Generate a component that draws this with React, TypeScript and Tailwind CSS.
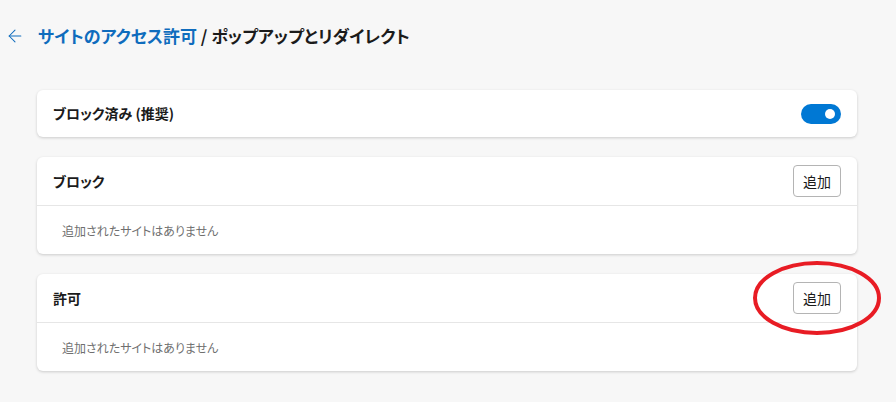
import { ArrowLeft } from 'lucide-react'

const FONT = "font-['Segoe_UI','Noto_Sans_CJK_JP',sans-serif] [font-feature-settings:'palt']"

function SiteListCard({ title }: { title: string }) {
  return (
    <section className="bg-white rounded-md shadow-[0_1px_3px_rgba(0,0,0,0.18)]">
      <div className="h-[49px] flex items-center justify-between pl-4 pr-4 border-b border-[#e6e6e6]">
        <span className="text-[14px] font-semibold text-[#1b1b1b]">{title}</span>
        <button className="w-12 h-8 border border-[#b4b4b4] rounded-sm text-[14px] text-[#1b1b1b] bg-white">
          追加
        </button>
      </div>
      <div className="h-[48px] flex items-center pl-[25px] pt-[2px]">
        <span className="text-[12px] text-[#6f6f6f]">追加されたサイトはありません</span>
      </div>
    </section>
  )
}

export default function App() {
  return (
    <div className={`relative w-[896px] h-[402px] bg-[#f7f7f7] overflow-hidden ${FONT}`}>
      {/* breadcrumb header */}
      <header className="h-[72px] flex items-center pl-[5px] pb-[1px]">
        <ArrowLeft size={20} strokeWidth={1.25} className="text-[#0f6cbd] mr-[13px]" />
        <h1 className="text-[17px] font-bold">
          <span className="text-[#0f6cbd]">サイトのアクセス許可</span>
          <span className="text-[#1b1b1b]"> / ポップアップとリダイレクト</span>
        </h1>
      </header>

      <main className="ml-[37px] w-[820px] mt-[18px] flex flex-col gap-5">
        <section className="h-[47px] bg-white rounded-md shadow-[0_1px_3px_rgba(0,0,0,0.18)] flex items-center justify-between pl-4 pr-4">
          <span className="text-[14px] font-semibold text-[#1b1b1b]">ブロック済み (推奨)</span>
          <div className="w-10 h-5 rounded-full bg-[#0078d4] flex items-center justify-end pr-[6px]">
            <span className="w-[10px] h-[10px] rounded-full bg-white" />
          </div>
        </section>

        <SiteListCard title="ブロック" />
        <SiteListCard title="許可" />
      </main>

      {/* red annotation ellipse */}
      <svg className="absolute left-[750px] top-[259px] pointer-events-none" width="134" height="78" viewBox="0 0 134 78">
        <ellipse cx="67" cy="39" rx="62" ry="35" fill="none" stroke="#e81c24" strokeWidth="4" />
      </svg>
    </div>
  )
}
